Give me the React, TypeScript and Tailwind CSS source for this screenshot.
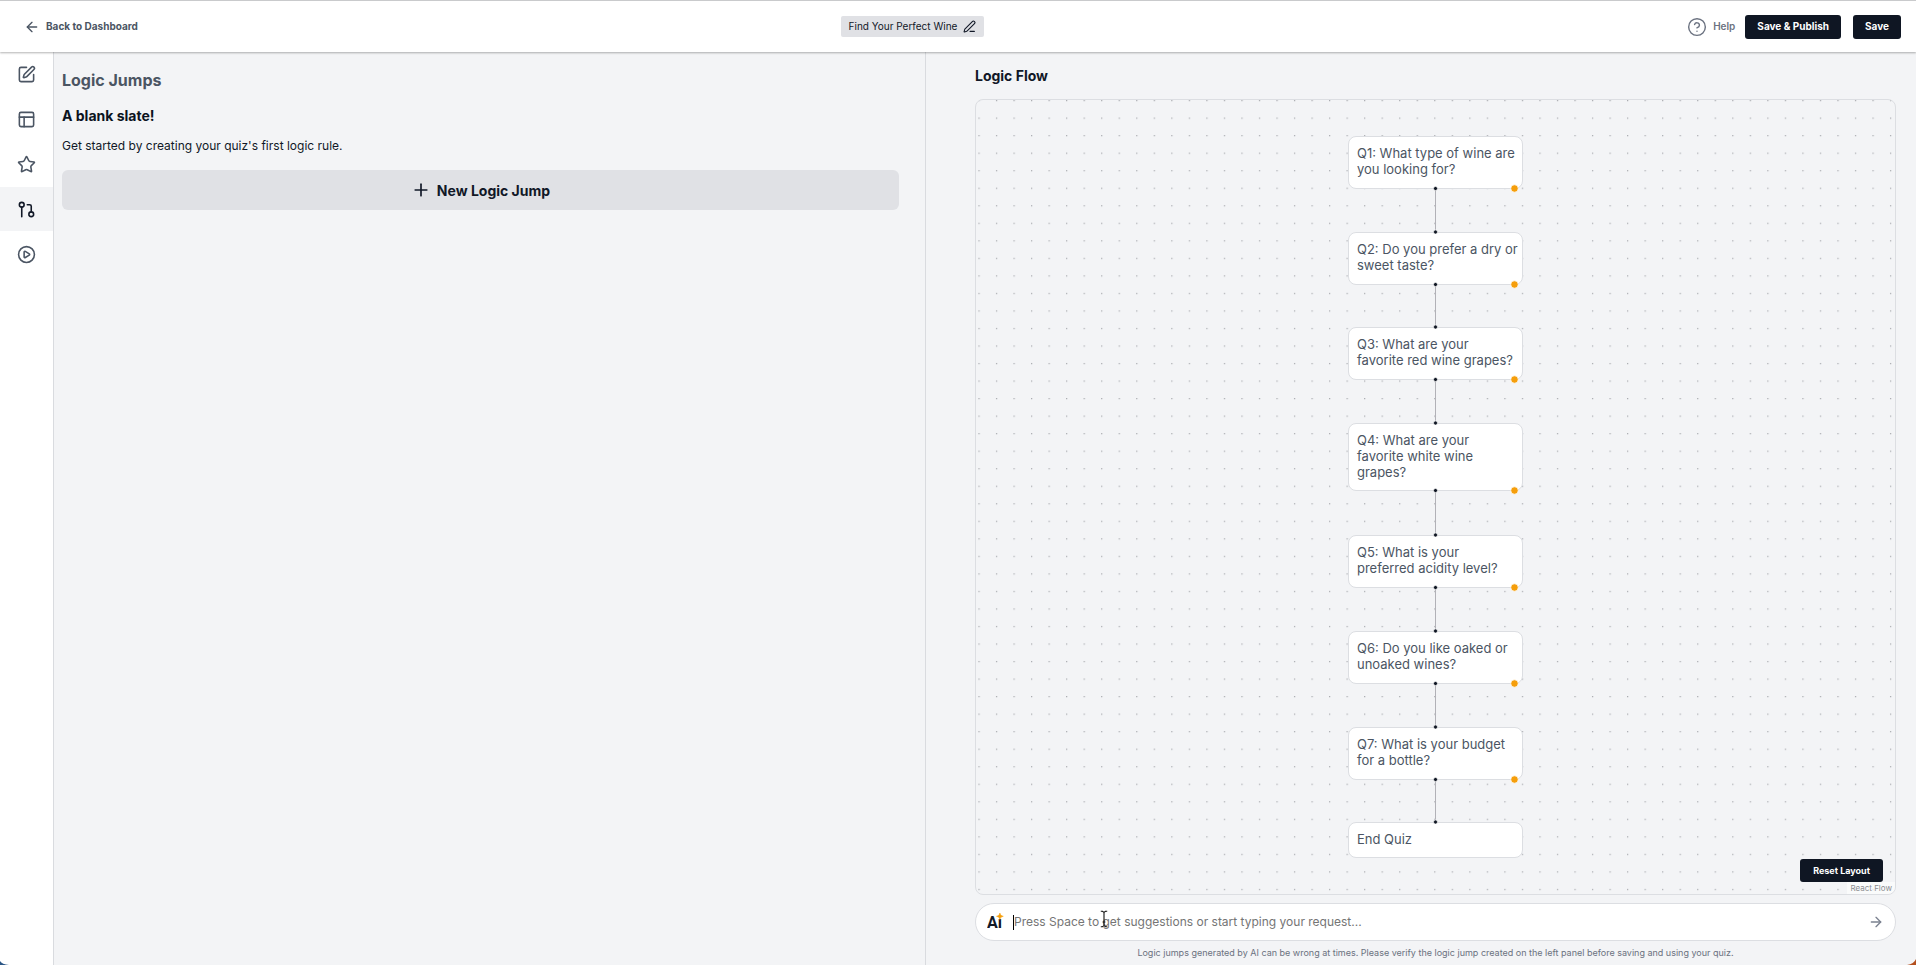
import { ArrowLeft, ArrowRight, CircleHelp, CirclePlay, GitPullRequest, Layout, PenLine, Plus, SquarePen, Star } from "lucide-react";

type FlowNode = { id: string; label: string; top: number; height: number; pending: boolean };

const NODE_WIDTH = 175;

const nodes: FlowNode[] = [
  { id: "q1", label: "Q1: What type of wine are\nyou looking for?", top: 0, height: 53, pending: true },
  { id: "q2", label: "Q2: Do you prefer a dry or\nsweet taste?", top: 96, height: 53, pending: true },
  { id: "q3", label: "Q3: What are your\nfavorite red wine grapes?", top: 191, height: 53, pending: true },
  { id: "q4", label: "Q4: What are your\nfavorite white wine\ngrapes?", top: 287, height: 68, pending: true },
  { id: "q5", label: "Q5: What is your\npreferred acidity level?", top: 399, height: 53, pending: true },
  { id: "q6", label: "Q6: Do you like oaked or\nunoaked wines?", top: 495, height: 53, pending: true },
  { id: "q7", label: "Q7: What is your budget\nfor a bottle?", top: 591, height: 53, pending: true },
  { id: "end", label: "End Quiz", top: 686, height: 36, pending: false },
];

const last = nodes[nodes.length - 1];
const FLOW_HEIGHT = last.top + last.height;

const sections = [
  { name: "Edit", Icon: SquarePen, active: false },
  { name: "Layout", Icon: Layout, active: false },
  { name: "Results", Icon: Star, active: false },
  { name: "Logic", Icon: GitPullRequest, active: true },
  { name: "Preview", Icon: CirclePlay, active: false },
];

function Header() {
  return (
    <header className="relative z-10 flex h-[52px] shrink-0 items-center justify-between border-t border-[#c9cacc] bg-white pr-[15px] pl-6 shadow-[0_1px_2px_rgba(0,0,0,0.3)]">
      <a href="#dashboard" className="flex items-center gap-1.5 text-[10px] font-bold text-[#4b5563]">
        <ArrowLeft size={16} strokeWidth={2} />
        Back to Dashboard
      </a>
      <button type="button" className="flex h-[21px] items-center gap-1.5 rounded-[2px] bg-[#e0e1e5] px-2 text-[10px] text-[#111827]">
        Find Your Perfect Wine
        <PenLine size={13} strokeWidth={2} />
      </button>
      <div className="flex items-center gap-3">
        <a href="#help" className="-mr-0.5 flex items-center gap-1.5 text-[10px] font-semibold text-[#6b7280]">
          <CircleHelp size={20} strokeWidth={1.7} />
          Help
        </a>
        <button type="button" className="h-6 rounded-[3px] bg-[#0f1623] px-3 text-[10px] font-bold text-white">Save &amp; Publish</button>
        <button type="button" className="h-6 rounded-[3px] bg-[#0f1623] px-3 text-[10px] font-bold text-white">Save</button>
      </div>
    </header>
  );
}

function Sidebar() {
  return (
    <nav aria-label="Quiz sections" className="flex w-[54px] shrink-0 flex-col gap-px border-r border-[#d9dbdf] bg-white">
      {sections.map(({ name, Icon, active }) => (
        <button
          key={name}
          type="button"
          aria-label={name}
          className={active ? "flex h-11 items-center justify-center bg-[#f3f4f6] text-[#111827]" : "flex h-11 items-center justify-center text-[#4b5563]"}
        >
          <Icon size={19} strokeWidth={2} />
        </button>
      ))}
    </nav>
  );
}

function LogicJumps() {
  return (
    <section className="flex shrink-0 grow-0 basis-[46.83%] flex-col border-r border-[#d9dbdf] pt-4 pr-[26px] pl-2">
      <h1 className="text-[16px] leading-6 font-bold text-[#4b5563]">Logic Jumps</h1>
      <h2 className="mt-3 text-[14px] leading-6 font-bold text-[#0b1320]">A blank slate!</h2>
      <p className="mt-2 text-[12px] leading-5 text-[#111827]">Get started by creating your quiz's first logic rule.</p>
      <button type="button" className="mt-[14px] flex h-10 items-center justify-center gap-1.5 rounded-[6px] bg-[#e0e1e5] text-[14px] font-bold text-[#111827]">
        <Plus size={20} strokeWidth={2} />
        New Logic Jump
      </button>
    </section>
  );
}

function FlowCanvas() {
  return (
    <div className="relative flex flex-1 justify-center overflow-hidden rounded-[8px] border border-[#dcdee2] pt-9 pb-9">
      <svg className="absolute inset-0 size-full" aria-hidden="true">
        <pattern id="dots" x="2.4" y="0" width="17.53" height="17.53" patternUnits="userSpaceOnUse">
          <circle cx="0.7" cy="0.7" r="0.6" fill="#8e9095" />
        </pattern>
        <rect width="100%" height="100%" fill="url(#dots)" />
      </svg>
      <div className="relative" style={{ width: NODE_WIDTH, height: FLOW_HEIGHT }}>
        {nodes.map((node) => (
          <div
            key={node.id}
            className="absolute left-0 rounded-[8px] border border-[#dcdee2] bg-white pt-2 pl-2 text-[13px] leading-4 whitespace-pre text-[#4b5563]"
            style={{ top: node.top, width: NODE_WIDTH, height: node.height }}
          >
            {node.label}
          </div>
        ))}
        <svg className="absolute inset-0 overflow-visible" width={NODE_WIDTH} height={FLOW_HEIGHT} aria-hidden="true">
          {nodes.slice(1).map((node, i) => {
            const from = nodes[i].top + nodes[i].height;
            return (
              <g key={node.id}>
                <line x1="87.5" x2="87.5" y1={from} y2={node.top} stroke="#b1b1b7" strokeWidth="1" />
                <circle cx="87.5" cy={from - 0.5} r="2" fill="#0f1623" stroke="#fff" strokeWidth="0.6" />
                <circle cx="87.5" cy={node.top} r="2" fill="#0f1623" stroke="#fff" strokeWidth="0.6" />
              </g>
            );
          })}
          {nodes.filter((node) => node.pending).map((node) => (
            <circle key={node.id} cx="166.5" cy={node.top + node.height - 0.5} r="3.7" fill="#f59e0b" stroke="#fff" strokeWidth="0.7" />
          ))}
        </svg>
      </div>
      <div className="absolute right-0 bottom-0 flex flex-col items-end">
        <button type="button" className="mr-3 h-[23px] rounded-[3px] bg-[#0f1623] px-[13px] text-[9px] font-bold text-white">Reset Layout</button>
        <a href="#react-flow" className="bg-white/60 px-[3px] text-[8px] leading-3 text-[#8b8d91]">React Flow</a>
      </div>
    </div>
  );
}

function AiLogo() {
  return (
    <svg className="shrink-0" width="17" height="19" viewBox="0 0 17 19" aria-hidden="true">
      <text x="0" y="14.5" fill="#111827" fontFamily="Roboto, sans-serif" fontSize="16" fontWeight="700">Ai</text>
      <circle cx="12.9" cy="3.4" r="2.6" fill="#fff" />
      <path d="M12.9 0c.6 2.1 1.2 2.7 3.4 3.3-2.200.6-2.800 1.200-3.400 3.400-.6-2.200-1.200-2.800-3.400-3.400 2.200-.6 2.800-1.200 3.400-3.300Z" fill="#f59e0b" stroke="#f59e0b" strokeWidth="0.5" />
    </svg>
  );
}

function Prompt() {
  return (
    <form className="relative mt-2 flex h-[38px] shrink-0 items-center rounded-full border border-[#dcdee2] bg-white px-[11px]" onSubmit={(e) => e.preventDefault()}>
      <AiLogo />
      <span className="ml-[9px] h-[15px] w-px shrink-0 bg-black" />
      <input
        type="text"
        aria-label="Logic request"
        placeholder="Press Space to get suggestions or start typing your request..."
        className="min-w-0 flex-1 text-[12px] text-[#111827] outline-none placeholder:text-[#757575]"
      />
      <button type="submit" aria-label="Send" className="text-[#7b8290]">
        <ArrowRight size={16} strokeWidth={2} />
      </button>
      <svg className="absolute top-[6px] left-[124px]" width="8" height="18" viewBox="0 0 8 18" fill="none" aria-hidden="true">
        <path d="M0.8 1.3h1.7L4 2.4l1.5-1.1h1.7M4 2.4v13.2M0.8 16.7h1.7L4 15.6l1.5 1.1h1.7M2.6 12h2.8" stroke="#111" strokeWidth="1.1" />
      </svg>
    </form>
  );
}

function LogicFlow() {
  return (
    <section className="flex min-w-0 flex-1 flex-col pt-3 pr-5 pl-[49px]">
      <h2 className="text-[14px] leading-6 font-bold text-[#111827]">Logic Flow</h2>
      <div className="mt-[11px] flex flex-1 flex-col">
        <FlowCanvas />
        <Prompt />
        <p className="h-6 text-center text-[9px] leading-6 text-[#6b7280]">
          Logic jumps generated by AI can be wrong at times. Please verify the logic jump created on the left panel before saving and using your quiz.
        </p>
      </div>
    </section>
  );
}

export default function App() {
  return (
    <div className="relative flex min-h-screen flex-col bg-[#f3f4f6] font-['Inter',sans-serif]">
      <Header />
      <div className="flex flex-1">
        <Sidebar />
        <div className="flex min-w-0 flex-1">
          <LogicJumps />
          <LogicFlow />
        </div>
      </div>
      <svg className="absolute bottom-0 left-0" width="9" height="4" viewBox="0 0 9 4" aria-hidden="true">
        <path d="M0 0Q2 3.3 9 4H0Z" fill="#2b5686" />
      </svg>
      <svg className="absolute right-0 bottom-0" width="9" height="6" viewBox="0 0 9 6" aria-hidden="true">
        <path d="M9 0Q7 5 0 6H9Z" fill="#b4501e" />
      </svg>
    </div>
  );
}
